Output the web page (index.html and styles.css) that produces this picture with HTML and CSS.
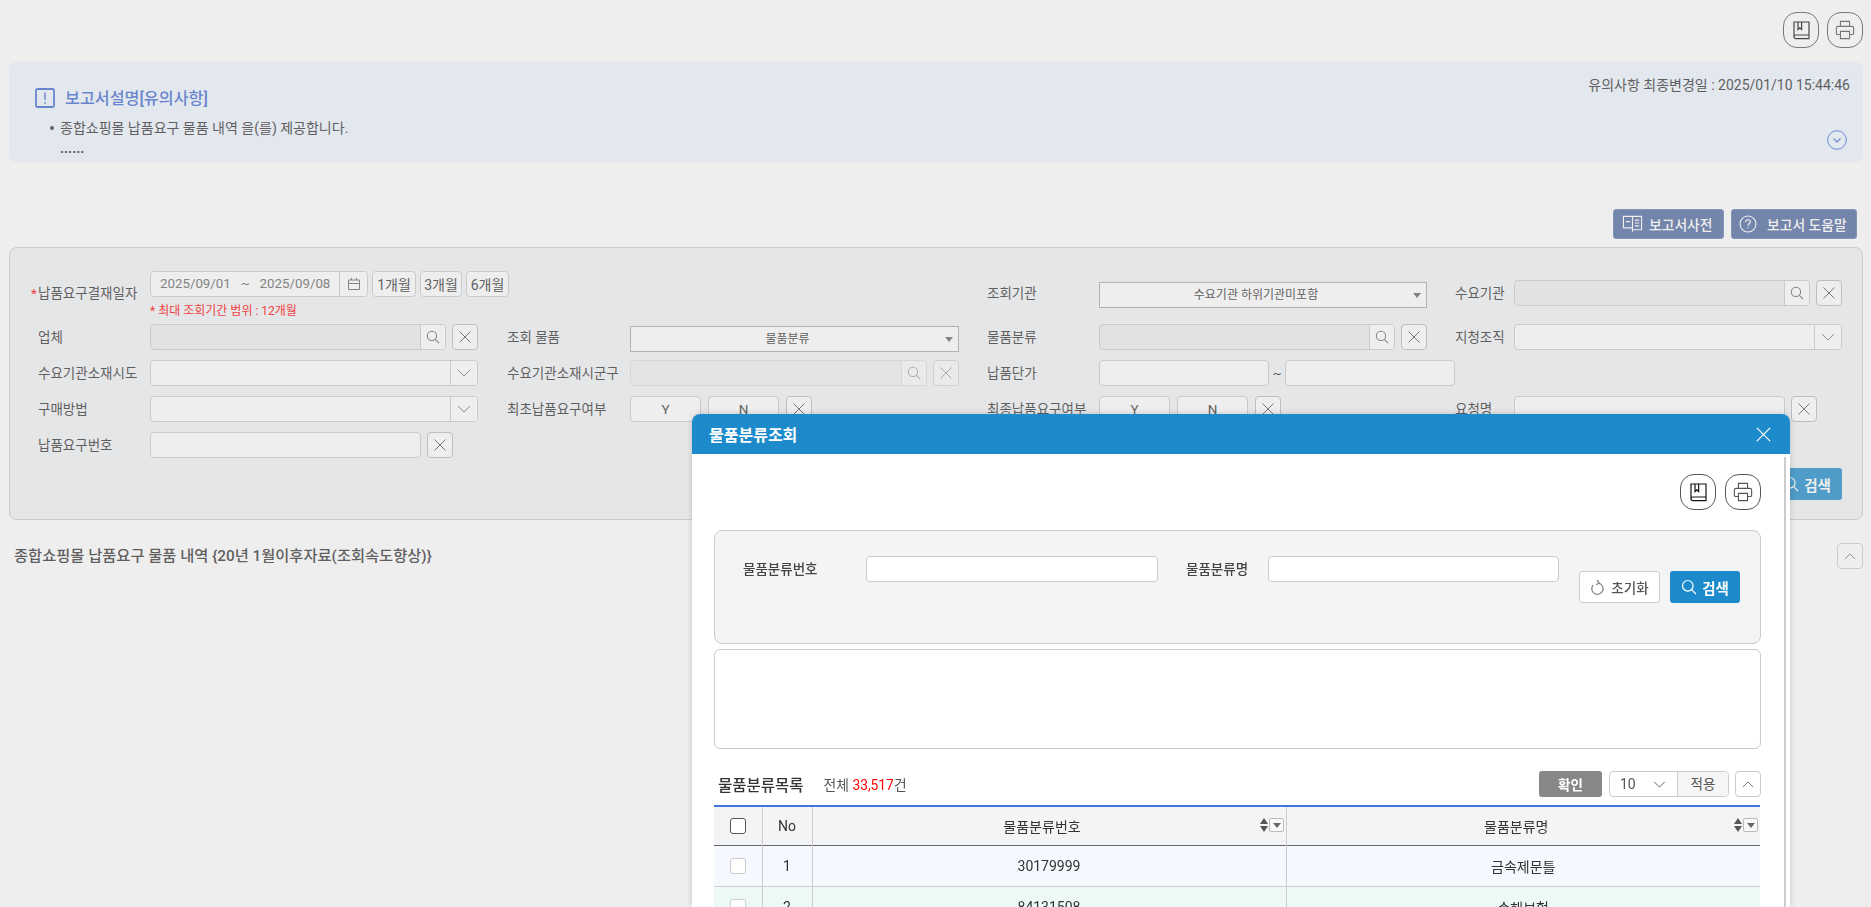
FILE: index.html
```html
<!DOCTYPE html>
<html lang="ko">
<head>
<meta charset="utf-8">
<title>종합쇼핑몰 납품요구 물품 내역</title>
<link rel="stylesheet" href="styles.css">
</head>
<body>
<svg class="defs" width="0" height="0" aria-hidden="true">
  <symbol id="i-book" viewBox="0 0 17 19"><path d="M1 16.500V1H16V14H3C1.800 14 1 14.800 1 15.800C1 16.900 1.800 17.600 3 17.600H16V14M5 1V8.500L6.800 6.800L8.600 8.500V1" fill="none" stroke="currentColor" stroke-width="1.200"/></symbol>
  <symbol id="i-print" viewBox="0 0 22 22"><path d="M6 7V1.500H16V7M6 16H3C2 16 1.500 15.500 1.500 14.500V9C1.500 8 2 7 3.500 7H18.500C20 7 20.500 8 20.500 9V14.500C20.500 15.500 20 16 19 16H16M6 12.500H16V20.500H6Z" fill="none" stroke="currentColor" stroke-width="1.200"/></symbol>
  <symbol id="i-search" viewBox="0 0 16 16"><circle cx="6.800" cy="6.800" r="5.300" fill="none" stroke="currentColor" stroke-width="1.200"/><path d="M10.600 10.600L15 15" fill="none" stroke="currentColor" stroke-width="1.200"/></symbol>
  <symbol id="i-x" viewBox="0 0 14 14"><path d="M1.500 1.500L12.500 12.500M12.500 1.500L1.500 12.500" fill="none" stroke="currentColor" stroke-width="1"/></symbol>
  <symbol id="i-down" viewBox="0 0 14 8"><path d="M1 1L7 7L13 1" fill="none" stroke="currentColor" stroke-width="1"/></symbol>
  <symbol id="i-up" viewBox="0 0 14 8"><path d="M1 7L7 1L13 7" fill="none" stroke="currentColor" stroke-width="1"/></symbol>
</svg>

<div class="page">
  <div class="tools">
    <button class="round-btn dark"><svg class="ic-book"><use href="#i-book"/></svg></button>
    <button class="round-btn"><svg class="ic-print"><use href="#i-print"/></svg></button>
  </div>

  <section class="notice">
    <p class="notice-date">유의사항 최종변경일 : 2025/01/10 15:44:46</p>
    <h2 class="notice-title">
      <svg class="ic-alert" viewBox="0 0 20 20"><rect x="1" y="1" width="18" height="18" rx="1.500" fill="none" stroke="currentColor" stroke-width="1.800"/><path d="M10 4.500V12M10 14V15.800" fill="none" stroke="currentColor" stroke-width="1.400"/></svg>
      <span class="notice-title-text">보고서설명[유의사항]</span>
    </h2>
    <ul class="notice-list">
      <li>종합쇼핑몰 납품요구 물품 내역 을(를) 제공합니다.<br><span class="dots">......</span></li>
    </ul>
    <svg class="ic-more" viewBox="0 0 20 20"><circle cx="10" cy="10" r="9.300" fill="none" stroke="currentColor" stroke-width="1"/><path d="M6.500 8.500L10 12L13.500 8.500" fill="none" stroke="currentColor" stroke-width="1.200"/></svg>
  </section>

  <div class="report-btns">
    <button class="report-btn">
      <svg class="ic-dict" viewBox="0 0 22 18"><path d="M11 1H20.500V15H11V1ZM11 1H1.500V13H11M11 17V15M13.500 5H18M13.500 8H18M13.500 11H18M4 6.500H8.500" fill="none" stroke="currentColor" stroke-width="1.200"/></svg>
      보고서사전
    </button>
    <button class="report-btn">
      <svg class="ic-help" viewBox="0 0 18 18"><circle cx="9" cy="9" r="8" fill="none" stroke="currentColor" stroke-width="1.100"/><path d="M6.600 7C6.600 5.600 7.700 4.700 9 4.700C10.400 4.700 11.400 5.600 11.400 6.800C11.400 8.500 9 8.600 9 10.700M9 12.200V13.600" fill="none" stroke="currentColor" stroke-width="1.100"/></svg>
      보고서 도움말
    </button>
  </div>

  <form class="filter">
    <div class="filter-grid">
      <label class="flabel first"><span class="req">*</span>납품요구결재일자</label>
      <div class="date-cell">
        <div class="date-line">
          <div class="field date-field">
            <span class="date-text">2025/09/01 &nbsp;&nbsp;~ &nbsp;&nbsp;2025/09/08</span>
            <span class="addon cal"><svg viewBox="0 0 14 14" class="ic-cal"><path d="M1.500 3H12.500V12.500H1.500ZM1.500 6.500H12.500M4.500 1V3M9.500 1V3" fill="none" stroke="currentColor" stroke-width="1"/></svg></span>
          </div>
          <button type="button" class="month m1">1개월</button>
          <button type="button" class="month m3">3개월</button>
          <button type="button" class="month m6">6개월</button>
        </div>
        <p class="date-note">* 최대 조회기간 범위 : 12개월</p>
      </div>
      <span class="empty"></span><span class="empty"></span>
      <label class="flabel first">조회기관</label>
      <div class="select sel-first"><span>수요기관 하위기관미포함</span><i class="caret"></i></div>
      <label class="flabel first">수요기관</label>
      <div class="ctl ctl-first">
        <div class="field disabled"><span class="grow"></span><span class="addon"><svg class="ic-s"><use href="#i-search"/></svg></span></div>
        <button type="button" class="xbtn"><svg class="ic-x"><use href="#i-x"/></svg></button>
      </div>

      <label class="flabel">업체</label>
      <div class="ctl">
        <div class="field disabled"><span class="grow"></span><span class="addon"><svg class="ic-s"><use href="#i-search"/></svg></span></div>
        <button type="button" class="xbtn"><svg class="ic-x"><use href="#i-x"/></svg></button>
      </div>
      <label class="flabel">조회 물품</label>
      <div class="select sel-second"><span>물품분류</span><i class="caret"></i></div>
      <label class="flabel">물품분류</label>
      <div class="ctl">
        <div class="field disabled"><span class="grow"></span><span class="addon"><svg class="ic-s"><use href="#i-search"/></svg></span></div>
        <button type="button" class="xbtn"><svg class="ic-x"><use href="#i-x"/></svg></button>
      </div>
      <label class="flabel">지청조직</label>
      <div class="field combo"><span class="grow"></span><span class="addon wide"><svg class="ic-d"><use href="#i-down"/></svg></span></div>

      <label class="flabel">수요기관소재시도</label>
      <div class="field combo"><span class="grow"></span><span class="addon wide"><svg class="ic-d"><use href="#i-down"/></svg></span></div>
      <label class="flabel">수요기관소재시군구</label>
      <div class="ctl faded">
        <div class="field disabled"><span class="grow"></span><span class="addon"><svg class="ic-s"><use href="#i-search"/></svg></span></div>
        <button type="button" class="xbtn"><svg class="ic-x"><use href="#i-x"/></svg></button>
      </div>
      <label class="flabel">납품단가</label>
      <div class="range">
        <div class="field"></div><span class="tilde">~</span><div class="field"></div>
      </div>
      <span class="empty"></span><span class="empty"></span>

      <label class="flabel">구매방법</label>
      <div class="field combo"><span class="grow"></span><span class="addon wide"><svg class="ic-d"><use href="#i-down"/></svg></span></div>
      <label class="flabel">최초납품요구여부</label>
      <div class="yn">
        <button type="button" class="yn-btn">Y</button><button type="button" class="yn-btn">N</button>
        <button type="button" class="xbtn"><svg class="ic-x"><use href="#i-x"/></svg></button>
      </div>
      <label class="flabel">최종납품요구여부</label>
      <div class="yn">
        <button type="button" class="yn-btn">Y</button><button type="button" class="yn-btn">N</button>
        <button type="button" class="xbtn"><svg class="ic-x"><use href="#i-x"/></svg></button>
      </div>
      <label class="flabel">요청명</label>
      <div class="ctl ctl-text">
        <div class="field"></div>
        <button type="button" class="xbtn"><svg class="ic-x"><use href="#i-x"/></svg></button>
      </div>

      <label class="flabel">납품요구번호</label>
      <div class="ctl ctl-text">
        <div class="field"></div>
        <button type="button" class="xbtn"><svg class="ic-x"><use href="#i-x"/></svg></button>
      </div>
    </div>
    <div class="filter-foot">
      <button type="button" class="search-btn"><svg class="ic-sb"><use href="#i-search"/></svg>검색</button>
    </div>
  </form>

  <div class="result-head">
    <h3 class="result-title">종합쇼핑몰 납품요구 물품 내역 {20년 1월이후자료(조회속도향상)}</h3>
    <button class="fold"><svg class="ic-u"><use href="#i-up"/></svg></button>
  </div>
</div>

<div class="dim"></div>

<div class="modal">
  <header class="modal-head">
    <h2>물품분류조회</h2>
    <svg class="ic-close"><use href="#i-x"/></svg>
  </header>
  <div class="modal-body">
    <div class="tools modal-tools">
      <button class="round-btn dark"><svg class="ic-book"><use href="#i-book"/></svg></button>
      <button class="round-btn"><svg class="ic-print"><use href="#i-print"/></svg></button>
    </div>
    <div class="m-search">
      <label class="m-label l1">물품분류번호</label>
      <div class="m-input i1"></div>
      <label class="m-label l2">물품분류명</label>
      <div class="m-input i2"></div>
      <button class="reset-btn"><svg class="ic-re" viewBox="0 0 14 17"><path d="M8.500 4.200A5.600 5.600 0 1 1 3.200 6M7 1L9.200 4L6 5.800" fill="none" stroke="currentColor" stroke-width="1.300"/></svg>초기화</button>
      <button class="search-btn m-go"><svg class="ic-sb"><use href="#i-search"/></svg>검색</button>
    </div>
    <div class="m-text"></div>
    <div class="m-listhead">
      <h3>물품분류목록</h3>
      <span class="count">전체 <em>33,517</em>건</span>
      <button class="confirm">확인</button>
      <div class="pager"><span class="pager-val">10<svg class="ic-pd"><use href="#i-down"/></svg></span><span class="pager-go">적용</span></div>
      <button class="fold"><svg class="ic-u"><use href="#i-up"/></svg></button>
    </div>
    <table class="grid">
      <colgroup><col class="c-chk"><col class="c-no"><col class="c-code"><col class="c-name"></colgroup>
      <thead>
        <tr>
          <th><span class="chk on"></span></th>
          <th>No</th>
          <th class="sortable">물품분류번호<span class="sorter"><i class="tri-u"></i><i class="tri-d"></i></span><span class="menu"><i class="caret"></i></span></th>
          <th class="sortable">물품분류명<span class="sorter"><i class="tri-u"></i><i class="tri-d"></i></span><span class="menu"><i class="caret"></i></span></th>
        </tr>
      </thead>
      <tbody>
        <tr class="r1"><td><span class="chk"></span></td><td>1</td><td>30179999</td><td>금속제문틀</td></tr>
        <tr class="r2"><td><span class="chk"></span></td><td>2</td><td>84131508</td><td>손해보험</td></tr>
      </tbody>
    </table>
    <div class="m-scroll"></div>
  </div>
</div>
</body>
</html>
```
FILE: styles.css
```css
* { box-sizing: border-box; }
html, body { margin: 0; height: 100%; overflow: hidden; background: #fff; }
body { font-family: Roboto, "Noto Sans CJK KR", sans-serif; font-size: 13.5px; color: #333; }
.defs { position: absolute; }
button { font: inherit; color: inherit; padding: 0; background: #fff; cursor: pointer; }
h2, h3, p, ul { margin: 0; padding: 0; }
svg { display: block; }

.page { padding: 12px 8px 0 9px; }
.tools { display: flex; justify-content: flex-end; gap: 8px; }
.round-btn { width: 36px; height: 36px; border: 1px solid #555; border-radius: 14px; background: transparent; display: flex; align-items: center; justify-content: center; color: #555; }
.round-btn.dark { color: #111; }
.ic-book { width: 17px; height: 19px; }
.ic-print { width: 20px; height: 20px; }

.notice { position: relative; margin-top: 14px; height: 100px; background: #eff5ff; border-radius: 8px; }
.notice-date { position: absolute; right: 13px; top: 14px; font-size: 14px; line-height: 18px; }
.notice-title { display: flex; align-items: center; gap: 10px; padding: 25px 0 0 26px; font-size: 16.2px; line-height: 20px; font-weight: 500; color: #3f6bd0; }
.notice-title-text { margin-top: 2px; }
.ic-alert { width: 20px; height: 20px; }
.notice-list { list-style: none; padding: 9px 0 0 51px; line-height: 20px; font-size: 14px; position: relative; }
.notice-list li::before { content: ""; position: absolute; left: 41px; top: 17px; width: 4px; height: 4px; border-radius: 50%; background: #333; }
.dots { font-weight: 700; }
.ic-more { position: absolute; right: 16px; top: 68px; width: 20px; height: 20px; color: #3f6fe0; }

.report-btns { display: flex; justify-content: flex-end; gap: 7px; margin-top: 47px; padding-right: 6px; }
.report-btn { display: flex; align-items: center; height: 30px; background: #5169a1; color: #fff; border: 1px solid #6c80ad; border-radius: 3px; font-weight: 500; font-size: 13.8px; padding: 0 0 0 8px; gap: 6px; white-space: nowrap; }
.ic-dict { width: 21px; height: 18px; }
.ic-help { width: 18px; height: 18px; flex: none; margin: 0 4px 0 -1px; }
.report-btn:first-child { width: 111px; }
.report-btn:last-child { width: 126px; }

.filter { margin-top: 8px; background: #f3f4f6; border: 1px solid #ccc; border-radius: 8px; padding: 23px 20px 19px 28px; }
.filter-grid { display: grid; grid-template-columns: 112px 357px 123px 357px 112px 356px 59px 328px; grid-template-rows: 43px repeat(4, 26px); row-gap: 10px; }
.flabel { font-size: 13.5px; line-height: 26px; white-space: nowrap; color: #333; }
.flabel.first { margin-top: 9px; }
.req { color: #f00; margin-left: -7px; display: inline-block; width: 7px; }
.field { display: flex; height: 26px; background: #fff; border: 1px solid #ccc; border-radius: 4px; overflow: hidden; }
.field.disabled { background: #eee; }
.grow { flex: 1; }
.addon { width: 25px; background: #fff; border-left: 1px solid #ccc; display: flex; align-items: center; justify-content: center; color: #666; }
.addon.wide { width: 27px; color: #777; }
.ic-s { width: 14px; height: 14px; }
.ic-d { width: 14px; height: 8px; }
.ic-x { width: 14px; height: 14px; }
.xbtn { flex: none; width: 26px; height: 26px; border: 1px solid #bbb; border-radius: 4px; display: flex; align-items: center; justify-content: center; color: #555; }
.ctl { display: flex; gap: 6px; height: 26px; width: 328px; }
.ctl .field { flex: 1; }
.ctl-first { margin-top: 9px; }
.ctl-text { width: 303px; }
.faded { opacity: .55; width: 329px; }
.combo { width: 328px; }
.date-cell { display: flex; flex-direction: column; }
.date-line { display: flex; }
.date-field { flex: none; width: 218px; color: #666; font-size: 13.3px; line-height: 24px; }
.date-text { flex: 1; padding-left: 9px; white-space: nowrap; }
.cal { width: 28px; flex: none; }
.ic-cal { width: 14px; height: 14px; }
.month { flex: none; height: 26px; border: 1px solid #ccc; border-radius: 4px; font-size: 14px; white-space: nowrap; color: #333; }
.m1 { width: 44px; margin-left: 4px; }
.m3 { width: 42px; margin-left: 4px; }
.m6 { width: 43px; margin-left: 4px; }
.date-note { margin-top: 7px; color: #f00; font-size: 12px; line-height: 14px; white-space: nowrap; }
.select { position: relative; height: 26px; width: 328px; padding-right: 14px; background: #fff; border: 1px solid #aaa; font-size: 12px; line-height: 24px; text-align: center; color: #333; }
.sel-first { margin-top: 11px; }
.sel-second { margin-top: 2px; width: 329px; }
.caret { position: absolute; width: 0; height: 0; border: 4px solid transparent; border-top: 5px solid #666; border-bottom: 0; }
.select .caret { right: 5px; top: 10px; }
.range { display: flex; align-items: center; width: 356px; }
.range .field { width: 170px; }
.tilde { width: 16px; text-align: center; }
.yn { display: flex; width: 329px; gap: 7px; }
.yn-btn { width: 71px; height: 26px; border: 1px solid #ccc; border-radius: 4px; font-size: 13.5px; }
.filter-foot { display: flex; justify-content: flex-end; margin-top: 10px; }
.search-btn { display: flex; align-items: center; justify-content: center; gap: 5px; width: 70px; height: 32px; background: #1c8acb; border: 0; border-radius: 3px; color: #fff; font-weight: 700; font-size: 14.5px; }
.ic-sb { width: 16px; height: 16px; }

.result-head { display: flex; justify-content: space-between; align-items: center; margin-top: 23px; padding: 0 0 0 5px; }
.result-title { font-size: 15.3px; font-weight: 500; line-height: 26px; color: #333; }
.fold { width: 26px; height: 26px; border: 1px solid #ccc; border-radius: 4px; display: flex; align-items: center; justify-content: center; color: #666; }
.ic-u { width: 12px; height: 7px; }

.dim { position: fixed; inset: 0; background: rgba(198, 198, 198, .3); }

.modal { position: fixed; left: 692px; top: 414px; width: 1098px; bottom: 0; background: #fff; border-radius: 8px 8px 0 0; box-shadow: 0 0 6px rgba(0, 0, 0, .18); overflow: hidden; }
.modal-head { display: flex; align-items: center; justify-content: space-between; height: 40px; background: #1c8acb; padding: 0 18px 0 17px; color: #fff; }
.modal-head h2 { font-size: 16px; font-weight: 700; }
.ic-close { width: 17px; height: 17px; }
.modal-body { position: relative; padding: 20px 29px 0 22px; height: 100%; }
.modal-tools { gap: 9px; }
.m-search { display: flex; align-items: flex-start; margin-top: 20px; height: 114px; padding: 25px 0 0 28px; background: #f3f4f6; border: 1px solid #ccc; border-radius: 8px; }
.m-label { line-height: 26px; font-weight: 500; color: #444; font-size: 13.5px; white-space: nowrap; }
.l1 { width: 123px; }
.l2 { width: 82px; margin-left: 28px; }
.m-input { height: 26px; background: #fff; border: 1px solid #ccc; border-radius: 4px; }
.i1 { width: 292px; }
.i2 { width: 291px; }
.reset-btn { display: flex; align-items: center; justify-content: center; gap: 7px; width: 81px; height: 32px; margin: 15px 0 0 20px; border: 1px solid #ccc; border-radius: 3px; font-weight: 500; color: #555; font-size: 13.5px; }
.ic-re { width: 14px; height: 17px; color: #888; }
.m-go { margin: 15px 0 0 10px; }
.m-text { margin-top: 5px; height: 100px; border: 1px solid #ccc; border-radius: 6px; }
.m-listhead { display: flex; align-items: center; margin-top: 22px; height: 26px; }
.m-listhead h3 { font-size: 15.5px; font-weight: 500; padding-left: 4px; color: #333; }
.count { margin-left: 20px; font-size: 13.8px; color: #555; flex: 1; }
.count em { font-style: normal; color: #f00; }
.confirm { width: 63px; height: 26px; background: #878787; border: 0; border-radius: 3px; color: #fff; font-weight: 700; font-size: 13.5px; }
.pager { display: flex; width: 120px; height: 26px; margin: 0 6px 0 7px; border: 1px solid #ccc; border-radius: 4px; overflow: hidden; }
.pager-val { display: flex; align-items: center; justify-content: space-between; width: 68px; padding: 0 11px 0 10px; border-right: 1px solid #ccc; font-size: 14px; color: #555; }
.ic-pd { width: 13px; height: 7px; }
.pager-go { flex: 1; background: #f5f5f5; text-align: center; line-height: 24px; color: #555; font-size: 13.5px; }
.grid { table-layout: fixed; border-collapse: collapse; width: 1046px; margin-top: 8px; font-size: 14px; color: #333; }
.c-chk { width: 48px; }
.c-no { width: 50px; }
.c-code { width: 474px; }
.c-name { width: 474px; }
.grid th, .grid td { text-align: center; padding: 0; font-weight: 400; border-left: 1px solid #ccc; }
.grid th:first-child, .grid td:first-child { border-left: 0; }
.grid thead tr { height: 39px; background: #f3f4f6; border-top: 2px solid #4472db; border-bottom: 1px solid #666; }
.grid tbody tr { height: 41px; border-bottom: 1px solid #ccc; }
.grid .sortable { position: relative; padding-right: 14px; }
.r1 { background: #f5f8fe; }
.r2 { background: #ecf9f6; }
.chk { display: inline-block; vertical-align: middle; width: 16px; height: 16px; background: #fff; border: 1px solid #ccc; border-radius: 3px; }
.chk.on { border-color: #555; }
.sorter { position: absolute; right: 18px; top: 11px; width: 8px; height: 14px; }
.tri-u, .tri-d { position: absolute; left: 0; width: 0; height: 0; border-left: 4px solid transparent; border-right: 4px solid transparent; }
.tri-u { top: 0; border-bottom: 6px solid #555; }
.tri-d { bottom: 0; border-top: 6px solid #555; }
.menu { position: absolute; right: 2px; top: 11px; width: 15px; height: 14px; background: #f8f8f8; border: 1px solid #bbb; border-radius: 2px; }
.menu .caret { left: 3px; top: 4px; }
.m-scroll { position: absolute; right: 4px; top: 3px; bottom: 0; width: 2px; background: #ccc; }
```
